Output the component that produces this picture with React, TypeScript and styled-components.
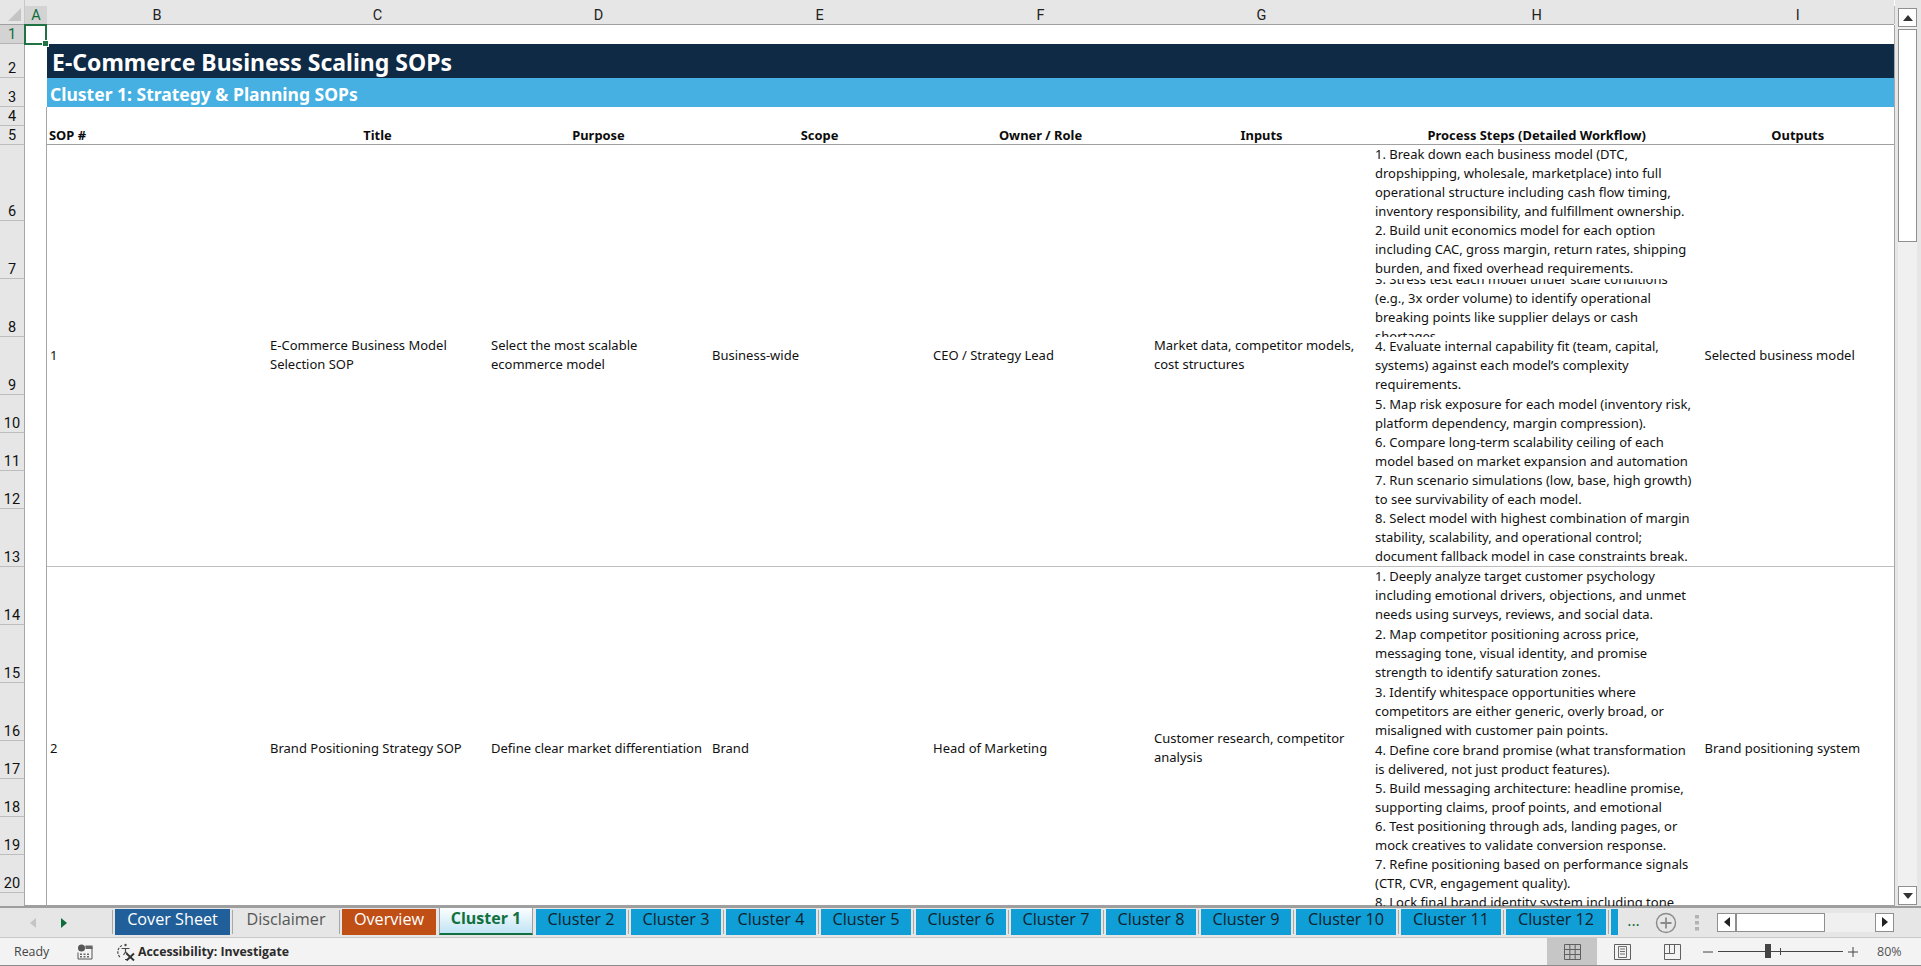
import React from "react";
import styled, { createGlobalStyle } from "styled-components";

const GlobalStyle = createGlobalStyle`
    html, body {
        margin: 0;
        padding: 0;
        background: #e6e6e6;
        overflow: hidden;
    }
`;

const BODY_FONT = `"Noto Sans", Roboto, sans-serif`;
const UI_FONT = `"Open Sans", "Noto Sans", sans-serif`;
const NARROW_FONT = `"Liberation Sans Narrow", Roboto, sans-serif`;

const Page = styled.div`
    width: 1921px;
    height: 966px;
    display: flex;
    flex-direction: column;
    background: #e6e6e6;
    overflow: hidden;
`;
const Workspace = styled.div`
    display: flex;
    height: 906px;
`;
const Sheet = styled.div`
    position: relative;
    width: 1895px;
    height: 906px;
    overflow: hidden;
    display: grid;
    grid-template-columns: 25px 22px 220px 221px 221px 221px 221px 221px 329.5px 192.5px 1px;
    grid-template-rows: 25px 19px 34px 29px 19px 19px 76px 58px 58px 58px 38px 38px 38px 58px 58px 58px 58px 38px 38px 38px 38px 38px;
    background: #fff;
    color: #111;
    font-family: ${BODY_FONT};
    font-size: 13px;
    box-shadow: inset 0 -1px 0 #a0a0a0;
`;
const Corner = styled.div`
    grid-column: 1;
    grid-row: 1;
    background: #e6e6e6;
    border-right: 1px solid #c8c8c8;
    border-bottom: 1px solid #a0a0a0;
    display: flex;
    align-items: flex-end;
    justify-content: flex-end;
    padding: 0 3px 3px 0;
`;
const ColHead = styled.div<{ $col: number; $active?: boolean }>`
    grid-column: ${(p) => p.$col};
    grid-row: 1;
    background: ${(p) => (p.$active ? "linear-gradient(#e6e6e6 6px, #d3d3d3 6px)" : "#e6e6e6")};
    color: ${(p) => (p.$active ? "#0f6b3a" : "#222")};
    border-bottom: 1px solid #a0a0a0;
    position: relative;
    display: flex;
    align-items: center;
    justify-content: center;
    padding-top: 7px;
    box-sizing: border-box;
    font-family: ${NARROW_FONT};
    font-size: 14.5px;
    &::after {
        content: "";
        position: absolute;
        right: -1px;
        top: 6px;
        bottom: 0;
        width: 1px;
        background: #bdbdbd;
    }
`;
const RowHead = styled.div<{ $row: number; $active?: boolean }>`
    grid-column: 1;
    grid-row: ${(p) => p.$row};
    background: ${(p) => (p.$active ? "#d3d3d3" : "#e6e6e6")};
    color: ${(p) => (p.$active ? "#0f6b3a" : "#111")};
    border-bottom: 1px solid ${(p) => (p.$active ? "#b5b5b5" : "#bdbdbd")};
    border-right: 1px solid #a6a6a6;
    box-sizing: border-box;
    display: flex;
    align-items: flex-end;
    justify-content: center;
    font-family: ${NARROW_FONT};
    font-size: 14.5px;
    line-height: 16px;
`;
const Banner = styled.div<{ $row: number; $bg: string; $size: number; $pad: number }>`
    grid-column: 3 / 11;
    grid-row: ${(p) => p.$row};
    background: ${(p) => p.$bg};
    color: #fff;
    font-weight: 700;
    font-size: ${(p) => p.$size}px;
    padding: 2px 0 0 ${(p) => p.$pad}px;
    display: flex;
    align-items: center;
    white-space: nowrap;
`;
const HeadCell = styled.div<{ $col: number; $left?: boolean }>`
    grid-column: ${(p) => p.$col};
    grid-row: 6;
    display: flex;
    align-items: flex-end;
    justify-content: ${(p) => (p.$left ? "flex-start" : "center")};
    padding: 0 0 1px ${(p) => (p.$left ? "2px" : "0")};
    font-weight: 700;
    font-size: 12.9px;
    line-height: 18px;
    color: #0c0c0c;
    white-space: nowrap;
`;
const Rule = styled.div<{ $row: number; $color: string }>`
    grid-column: 3 / 11;
    grid-row: ${(p) => p.$row};
    align-self: end;
    height: 1px;
    background: ${(p) => p.$color};
`;
const EdgeLine = styled.div<{ $col: number; $from: number }>`
    grid-column: ${(p) => p.$col};
    grid-row: ${(p) => p.$from} / -1;
    width: 1px;
    background: #a6a6a6;
    justify-self: ${(p) => (p.$col === 2 ? "end" : "start")};
`;
const Merged = styled.div<{ $col: number; $from: number; $to: number }>`
    grid-column: ${(p) => p.$col};
    grid-row: ${(p) => p.$from} / ${(p) => p.$to};
    display: flex;
    flex-direction: column;
    justify-content: center;
    padding: 0 0 2px 3px;
    overflow: hidden;
`;
const StepCell = styled.div<{ $row: number; $top?: boolean }>`
    grid-column: 9;
    grid-row: ${(p) => p.$row};
    display: flex;
    flex-direction: column;
    justify-content: ${(p) => (p.$top ? "flex-start" : "center")};
    padding: 0 0 1px 3px;
    overflow: hidden;
    min-height: 0;
`;
const Line = styled.div`
    line-height: 19px;
    height: 19px;
    flex: none;
    white-space: nowrap;
`;
const Selection = styled.div`
    position: absolute;
    left: 24px;
    top: 24px;
    width: 23px;
    height: 21px;
    box-sizing: border-box;
    border: 2px solid #1f7244;
    &::after {
        content: "";
        position: absolute;
        right: -4px;
        bottom: -4px;
        width: 5px;
        height: 5px;
        background: #1f7244;
        border: 1px solid #fff;
    }
`;
const VScroll = styled.div`
    width: 26px;
    padding: 8px 4px 0 3px;
    box-sizing: border-box;
    display: flex;
    flex-direction: column;
    background: #e6e6e6;
`;
const ScrollBtn = styled.div`
    width: 19px;
    height: 19px;
    box-sizing: border-box;
    background: #fff;
    border: 1px solid #8f8f8f;
    display: flex;
    align-items: center;
    justify-content: center;
    flex: none;
`;
const VTrack = styled.div`
    flex: 1;
    width: 19px;
    background: #f0f0f0;
    padding-top: 2px;
`;
const VThumb = styled.div`
    height: 213px;
    box-sizing: border-box;
    background: #fff;
    border: 1px solid #8f8f8f;
`;
const BottomBtnSlot = styled.div`
    height: 1px;
`;

const TabBar = styled.div`
    height: 32px;
    background: #e6e6e6;
    border-top: 2px solid #9e9e9e;
    border-bottom: 1px solid #cacaca;
    box-sizing: border-box;
    display: flex;
    align-items: stretch;
    font-family: ${UI_FONT};
    font-size: 16.2px;
`;
const TabNav = styled.div`
    width: 110px;
    flex: none;
    display: flex;
    align-items: center;
    padding-left: 28px;
    gap: 21px;
    box-sizing: border-box;
`;
const TabStrip = styled.div`
    display: flex;
    align-items: flex-start;
    width: 1508px;
    flex: none;
    overflow: hidden;
`;
const Sep = styled.div`
    width: 1px;
    height: 24px;
    margin: 2px 2px 0 2px;
    background: #a8a8a8;
    flex: none;
`;
const Tab = styled.div<{ $w: number; $bg: string; $fg: string }>`
    width: ${(p) => p.$w}px;
    height: 26px;
    margin-top: 1px;
    padding-bottom: 5px;
    box-sizing: border-box;
    flex: none;
    background: ${(p) => p.$bg};
    color: ${(p) => p.$fg};
    display: flex;
    align-items: center;
    justify-content: center;
    white-space: nowrap;
    line-height: 1;
`;
const ActiveTab = styled.div`
    width: 94px;
    height: 29px;
    margin: -2px 3px 0 3px;
    padding-bottom: 4px;
    flex: none;
    box-sizing: border-box;
    background: linear-gradient(#ffffff, #c1e4f5);
    color: #107040;
    font-weight: 700;
    border-left: 1px solid #9e9e9e;
    border-right: 1px solid #9e9e9e;
    border-top: 1px solid #9e9e9e;
    border-bottom: 2px solid #107040;
    display: flex;
    align-items: center;
    justify-content: center;
    font-size: 16px;
`;
const TabTail = styled.div`
    flex: none;
    display: flex;
    align-items: center;
`;
const More = styled.div`
    width: 37px;
    padding-right: 6px;
    box-sizing: border-box;
    text-align: center;
    color: #0f6b3a;
    font-size: 16px;
    margin-top: -6px;
`;
const DragDots = styled.div`
    width: 40px;
    display: flex;
    justify-content: center;
`;
const HScroll = styled.div`
    display: flex;
    width: 177px;
    height: 19px;
    margin-top: -1px;
    background: #f0f0f0;
`;
const HThumb = styled.div`
    width: 89px;
    box-sizing: border-box;
    background: #fff;
    border: 1px solid #8f8f8f;
    margin-right: auto;
`;

const StatusBar = styled.div`
    height: 28px;
    box-sizing: border-box;
    background: #f3f3f3;
    border-bottom: 1px solid #8c8c8c;
    display: flex;
    align-items: center;
    font-family: ${UI_FONT};
    font-size: 12px;
    color: #444;
`;
const StatusText = styled.span<{ $w: number; $bold?: boolean }>`
    width: ${(p) => p.$w}px;
    flex: none;
    font-weight: ${(p) => (p.$bold ? 700 : 400)};
    color: ${(p) => (p.$bold ? "#2b2b2b" : "#444")};
    font-size: ${(p) => (p.$bold ? "12.3px" : "12.4px")};
    white-space: nowrap;
`;
const StatusIcon = styled.span<{ $w: number }>`
    width: ${(p) => p.$w}px;
    flex: none;
    display: flex;
    align-items: center;
`;
const ViewBtn = styled.div<{ $active?: boolean }>`
    width: 50px;
    height: 27px;
    flex: none;
    background: ${(p) => (p.$active ? "#c6c6c6" : "transparent")};
    display: flex;
    align-items: center;
    justify-content: center;
`;
const ZoomBox = styled.div`
    display: flex;
    align-items: center;
    margin-left: 6px;
    gap: 5px;
`;
const ZoomTrack = styled.div`
    position: relative;
    width: 125px;
    height: 1px;
    background: #444;
`;
const ZoomHandle = styled.div`
    position: absolute;
    left: 47px;
    top: -7px;
    width: 6px;
    height: 14px;
    background: #444;
`;
const ZoomTick = styled.div`
    position: absolute;
    left: 62px;
    top: -3px;
    width: 1px;
    height: 7px;
    background: #444;
`;
const ZoomPct = styled.span`
    margin-left: 19px;
    font-size: 12.5px;
    color: #555;
`;

const columns = ["B", "C", "D", "E", "F", "G", "H", "I"];
const heads = ["SOP #", "Title", "Purpose", "Scope", "Owner / Role", "Inputs", "Process Steps (Detailed Workflow)", "Outputs"];
// row 21 is below the fold, its label never shows
const rowNumbers = Array.from({ length: 21 }, (_, i) => i + 1);

type Sop = {
    from: number;
    to: number;
    cells: string[][];
    steps: string[][];
};

const sops: Sop[] = [
    {
        from: 7,
        to: 15,
        cells: [
            ["1"],
            ["E-Commerce Business Model", "Selection SOP"],
            ["Select the most scalable", "ecommerce model"],
            ["Business-wide"],
            ["CEO / Strategy Lead"],
            ["Market data, competitor models,", "cost structures"],
            [],
            ["Selected business model"],
        ],
        steps: [
            ["1. Break down each business model (DTC,", "dropshipping, wholesale, marketplace) into full", "operational structure including cash flow timing,", "inventory responsibility, and fulfillment ownership."],
            ["2. Build unit economics model for each option", "including CAC, gross margin, return rates, shipping", "burden, and fixed overhead requirements."],
            ["3. Stress test each model under scale conditions", "(e.g., 3x order volume) to identify operational", "breaking points like supplier delays or cash", "shortages."],
            ["4. Evaluate internal capability fit (team, capital,", "systems) against each model\u2019s complexity", "requirements."],
            ["5. Map risk exposure for each model (inventory risk,", "platform dependency, margin compression)."],
            ["6. Compare long-term scalability ceiling of each", "model based on market expansion and automation"],
            ["7. Run scenario simulations (low, base, high growth)", "to see survivability of each model."],
            ["8. Select model with highest combination of margin", "stability, scalability, and operational control;", "document fallback model in case constraints break."],
        ],
    },
    {
        from: 15,
        to: 23,
        cells: [
            ["2"],
            ["Brand Positioning Strategy SOP"],
            ["Define clear market differentiation"],
            ["Brand"],
            ["Head of Marketing"],
            ["Customer research, competitor", "analysis"],
            [],
            ["Brand positioning system"],
        ],
        steps: [
            ["1. Deeply analyze target customer psychology", "including emotional drivers, objections, and unmet", "needs using surveys, reviews, and social data."],
            ["2. Map competitor positioning across price,", "messaging tone, visual identity, and promise", "strength to identify saturation zones."],
            ["3. Identify whitespace opportunities where", "competitors are either generic, overly broad, or", "misaligned with customer pain points."],
            ["4. Define core brand promise (what transformation", "is delivered, not just product features)."],
            ["5. Build messaging architecture: headline promise,", "supporting claims, proof points, and emotional"],
            ["6. Test positioning through ads, landing pages, or", "mock creatives to validate conversion response."],
            ["7. Refine positioning based on performance signals", "(CTR, CVR, engagement quality)."],
            ["8. Lock final brand identity system including tone"],
        ],
    },
];

const solidTabs = [
    { label: "Cluster 2", w: 90 },
    { label: "Cluster 3", w: 90 },
    { label: "Cluster 4", w: 90 },
    { label: "Cluster 5", w: 90 },
    { label: "Cluster 6", w: 90 },
    { label: "Cluster 7", w: 90 },
    { label: "Cluster 8", w: 90 },
    { label: "Cluster 9", w: 90 },
    { label: "Cluster 10", w: 100 },
    { label: "Cluster 11", w: 100 },
    { label: "Cluster 12", w: 100 },
    { label: "", w: 7 },
];

const CornerMark = () => (
    <svg width="13" height="13" viewBox="0 0 13 13">
        <path d="M13 0V13H0Z" fill="#c4c4c4" />
    </svg>
);
const Tri = ({ dir, color, size = 10 }: { dir: "up" | "down" | "left" | "right"; color: string; size?: number }) => {
    const d = { up: "M5 2 10 8H0Z", down: "M0 2H10L5 8Z", left: "M8 0V10L2 5Z", right: "M2 0V10L8 5Z" }[dir];
    return (
        <svg width={size} height={size} viewBox="0 0 10 10">
            <path d={d} fill={color} />
        </svg>
    );
};
const PlusCircle = () => (
    <svg width="22" height="22" viewBox="0 0 22 22" fill="none" stroke="#8a8a8a">
        <circle cx="11" cy="11" r="9.5" strokeWidth="1.4" />
        <path d="M11 5.5v11M5.5 11h11" strokeWidth="1.8" />
    </svg>
);
const Dots = () => (
    <svg width="4" height="16" viewBox="0 0 4 16">
        <rect x="0" y="0" width="4" height="3.5" fill="#b3b3b3" />
        <rect x="0" y="6" width="4" height="3.5" fill="#b3b3b3" />
        <rect x="0" y="12" width="4" height="3.5" fill="#b3b3b3" />
    </svg>
);
const MacroIcon = () => (
    <svg width="16" height="16" viewBox="0 0 16 16" fill="none">
        <circle cx="4.5" cy="4" r="3.5" fill="#555" />
        <path d="M8.5 2.5H15V15H1V8.5" stroke="#555" />
        <path d="M8.5 1.5H15.5V5H8.5Z" fill="#666" />
        <path d="M3 9.5h2v1.5H3zM6.500 9.500h2V11h-2zM10 9.500h2V11h-2zM3 12h2v1.500H3zM6.500 12h2v1.500H6.500zM10 12h2v1.500H10z" fill="#666" />
    </svg>
);
const A11yIcon = () => (
    <svg width="20" height="18" viewBox="0 0 20 18" fill="none" stroke="#4a4a4a" strokeWidth="1.2">
        <path d="M6 2.500A7 7 0 0 0 4 14M9 16.500h2" strokeDasharray="2.500 1.200" />
        <circle cx="9.500" cy="2" r="1.200" fill="#4a4a4a" stroke="none" />
        <path d="M5.500 5.500h8M9.500 5.500v3.500M9.500 9 7.500 12M9.500 9l2 2" />
        <path d="M10.500 10.500 18 17.500M18 10.500 10.500 17.500" strokeWidth="1.900" stroke="#333" />
    </svg>
);
const GridIcon = () => (
    <svg width="17" height="16" viewBox="0 0 17 16" fill="none" stroke="#5f5f5f">
        <path d="M.5.500h16v15H.5zM5.830.500v15M11.170.500v15M.5 5.500h16M.5 10.500h16" />
    </svg>
);
const PageIcon = () => (
    <svg width="17" height="16" viewBox="0 0 17 16" fill="none" stroke="#5f5f5f">
        <path d="M.5.500h16v15H.5z" />
        <path d="M4.500 2.500h8v11h-8zM6 5h5M6 7.500h5M6 10h5" strokeWidth=".9" />
    </svg>
);
const BreakIcon = () => (
    <svg width="17" height="16" viewBox="0 0 17 16" fill="none" stroke="#5f5f5f">
        <path d="M.5.500h16v15H.5zM.5 9.500h10V.5M5.500.5v9" />
    </svg>
);
const ZoomGlyph = ({ plus }: { plus?: boolean }) => (
    <svg width="10" height="10" viewBox="0 0 10 10" stroke="#444">
        <path d="M0 5h10" />
        {plus && <path d="M5 0v10" />}
    </svg>
);

const App = () => {
    return (
        <Page>
            <GlobalStyle />
            <Workspace>
                <Sheet>
                    <Corner>
                        <CornerMark />
                    </Corner>
                    <ColHead $col={2} $active>A</ColHead>
                    {columns.map((c, i) => (
                        <ColHead key={c} $col={i + 3}>{c}</ColHead>
                    ))}
                    {rowNumbers.map((n) => (
                        <RowHead key={n} $row={n + 1} $active={n === 1}>{n < 21 ? n : ""}</RowHead>
                    ))}
                    <Banner $row={3} $bg="#0f2a44" $size={23} $pad={5}>E-Commerce Business Scaling SOPs</Banner>
                    <Banner $row={4} $bg="#45b0e1" $size={17.5} $pad={3}>Cluster 1: Strategy &amp; Planning SOPs</Banner>
                    {heads.map((h, i) => (
                        <HeadCell key={h} $col={i + 3} $left={i === 0}>{h}</HeadCell>
                    ))}
                    <Rule $row={6} $color="#a0a0a0" />
                    <Rule $row={14} $color="#bfbfbf" />
                    <EdgeLine $col={2} $from={5} />
                    <EdgeLine $col={11} $from={2} />
                    {sops.map((s) => (
                        <React.Fragment key={s.from}>
                            {s.cells.map((lines, i) =>
                                lines.length > 0 ? (
                                    <Merged key={i} $col={i + 3} $from={s.from} $to={s.to}>
                                        {lines.map((l) => (
                                            <Line key={l}>{l}</Line>
                                        ))}
                                    </Merged>
                                ) : null
                            )}
                            {s.steps.map((step, i) => (
                                <StepCell key={i} $row={s.from + i} $top={step.length === 1}>
                                    {step.map((l) => (
                                        <Line key={l}>{l}</Line>
                                    ))}
                                </StepCell>
                            ))}
                        </React.Fragment>
                    ))}
                    <Selection />
                </Sheet>
                <VScroll>
                    <ScrollBtn><Tri dir="up" color="#333" /></ScrollBtn>
                    <VTrack><VThumb /></VTrack>
                    <ScrollBtn><Tri dir="down" color="#333" /></ScrollBtn>
                    <BottomBtnSlot />
                </VScroll>
            </Workspace>
            <TabBar>
                <TabNav>
                    <Tri dir="left" color="#c4c4c4" />
                    <Tri dir="right" color="#0f6b3a" />
                </TabNav>
                <TabStrip>
                    <Sep />
                    <Tab $w={115} $bg="#215f9a" $fg="#fff">Cover Sheet</Tab>
                    <Sep />
                    <Tab $w={102} $bg="transparent" $fg="#555">Disclaimer</Tab>
                    <Sep />
                    <Tab $w={94} $bg="#c04f15" $fg="#fff">Overview</Tab>
                    <ActiveTab>Cluster 1</ActiveTab>
                    {solidTabs.map((t, i) => (
                        <React.Fragment key={i}>
                            {i > 0 && <Sep />}
                            <Tab $w={t.w} $bg="#0f9ed5" $fg="#10222c">{t.label}</Tab>
                        </React.Fragment>
                    ))}
                </TabStrip>
                <TabTail>
                    <More>...</More>
                    <PlusCircle />
                    <DragDots><Dots /></DragDots>
                    <HScroll>
                        <ScrollBtn><Tri dir="left" color="#222" /></ScrollBtn>
                        <HThumb />
                        <ScrollBtn><Tri dir="right" color="#222" /></ScrollBtn>
                    </HScroll>
                </TabTail>
            </TabBar>
            <StatusBar>
                <StatusIcon $w={14} />
                <StatusText $w={63}>Ready</StatusText>
                <StatusIcon $w={39}><MacroIcon /></StatusIcon>
                <StatusIcon $w={22}><A11yIcon /></StatusIcon>
                <StatusText $w={1409} $bold>Accessibility: Investigate</StatusText>
                <ViewBtn $active><GridIcon /></ViewBtn>
                <ViewBtn><PageIcon /></ViewBtn>
                <ViewBtn><BreakIcon /></ViewBtn>
                <ZoomBox>
                    <ZoomGlyph />
                    <ZoomTrack>
                        <ZoomHandle />
                        <ZoomTick />
                    </ZoomTrack>
                    <ZoomGlyph plus />
                </ZoomBox>
                <ZoomPct>80%</ZoomPct>
            </StatusBar>
        </Page>
    );
};

export default App;
